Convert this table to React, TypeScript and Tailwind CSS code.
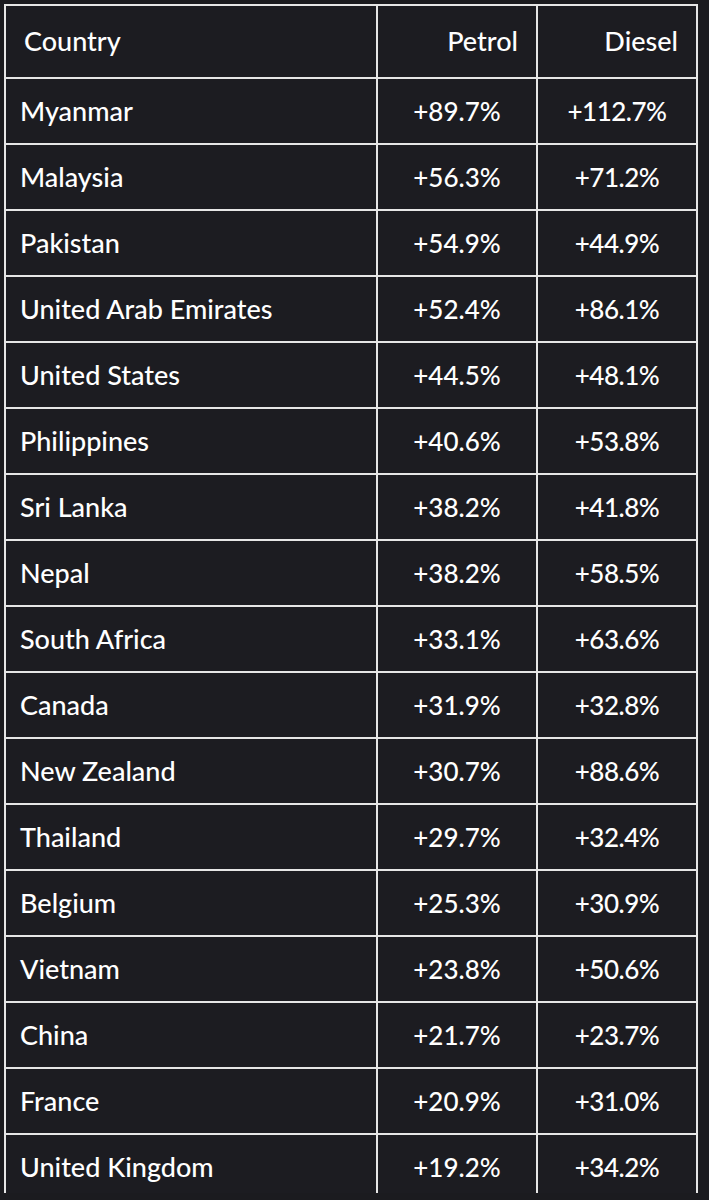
const ROWS: [string, string, string][] = [
  ['Myanmar', '+89.7%', '+112.7%'],
  ['Malaysia', '+56.3%', '+71.2%'],
  ['Pakistan', '+54.9%', '+44.9%'],
  ['United Arab Emirates', '+52.4%', '+86.1%'],
  ['United States', '+44.5%', '+48.1%'],
  ['Philippines', '+40.6%', '+53.8%'],
  ['Sri Lanka', '+38.2%', '+41.8%'],
  ['Nepal', '+38.2%', '+58.5%'],
  ['South Africa', '+33.1%', '+63.6%'],
  ['Canada', '+31.9%', '+32.8%'],
  ['New Zealand', '+30.7%', '+88.6%'],
  ['Thailand', '+29.7%', '+32.4%'],
  ['Belgium', '+25.3%', '+30.9%'],
  ['Vietnam', '+23.8%', '+50.6%'],
  ['China', '+21.7%', '+23.7%'],
  ['France', '+20.9%', '+31.0%'],
  ['United Kingdom', '+19.2%', '+34.2%'],
];

export default function App() {
  return (
    <div
      className="h-[1200px] w-[709px] bg-[#1b1b1f] pl-[4px] pt-[4px] text-white"
      style={{ fontFamily: 'Lato, "Noto Sans", sans-serif' }}
    >
      {/* table is cropped at the bottom, like the screenshot */}
      <div className="h-[1189px] w-[694px] overflow-hidden">
        <div className="grid grid-cols-[370px_158px_158px] gap-[2px] bg-[#e6e6e6] p-[2px] pb-0">
          <div className="flex h-[71px] items-center bg-[#1c1c21] pl-[18px] text-[27px] font-medium">Country</div>
          <div className="flex h-[71px] items-center justify-end bg-[#1c1c21] pr-[18px] text-[27px] font-medium">Petrol</div>
          <div className="flex h-[71px] items-center justify-end bg-[#1c1c21] pr-[18px] text-[27px] font-medium">Diesel</div>
          {ROWS.map(([country, petrol, diesel]) => (
            <div key={country} className="contents">
              <div className="flex h-[64px] items-center bg-[#1c1c21] pl-[14px] text-[27px] font-medium">{country}</div>
              <div className="flex h-[64px] items-center justify-center bg-[#1c1c21] text-[26px] font-medium">{petrol}</div>
              <div className="flex h-[64px] items-center justify-center bg-[#1c1c21] text-[26px] font-medium tracking-[-0.5px]">{diesel}</div>
            </div>
          ))}
        </div>
      </div>
    </div>
  );
}
